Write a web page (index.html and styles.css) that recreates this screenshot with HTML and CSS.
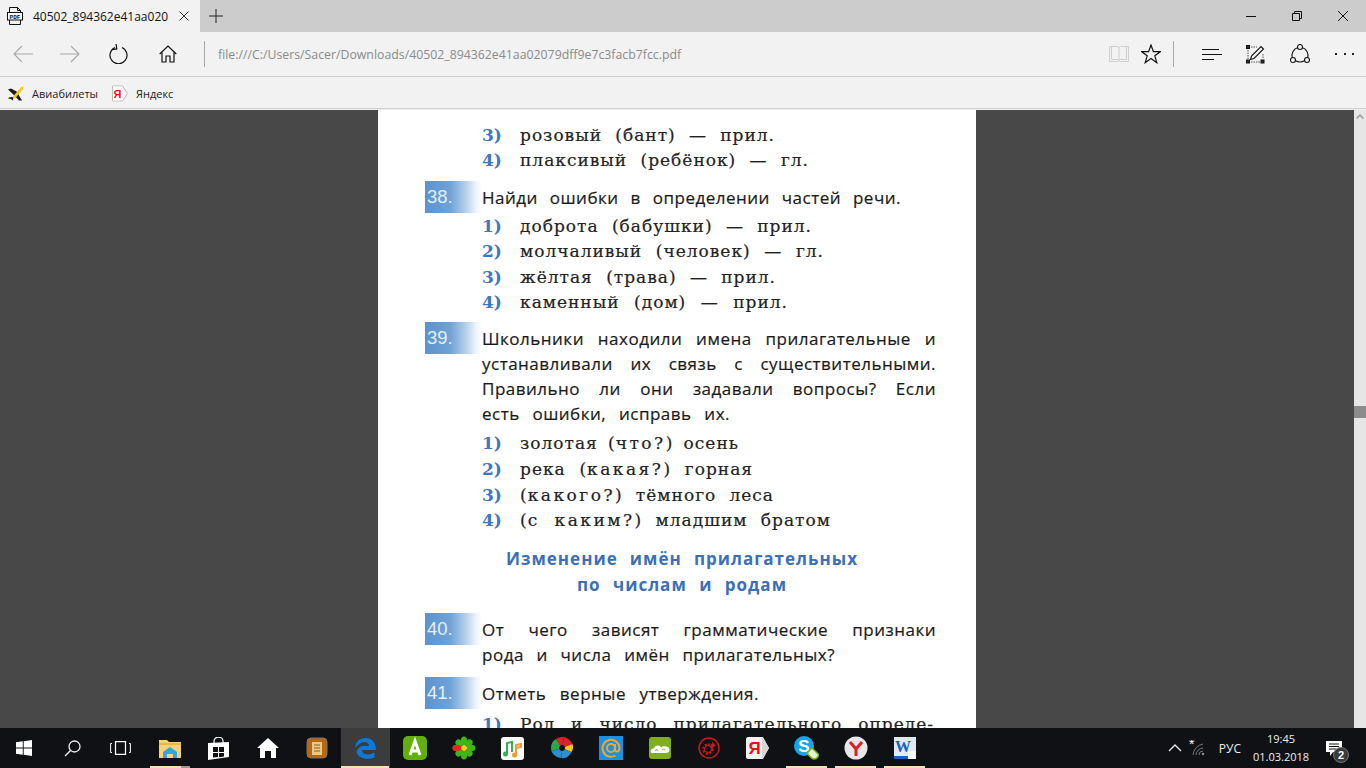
FILE: index.html
```html
<!DOCTYPE html>
<html lang="ru">
<head>
<meta charset="utf-8">
<title>40502_894362e41aa02079dff9e7c3facb7fcc.pdf</title>
<link rel="stylesheet" href="styles.css">
</head>
<body>
<header class="tabstrip">
  <div class="tab">
    <svg class="ic-pdf" width="16" height="18" viewBox="0 0 16 18"><path d="M2.500 5V.5h8l3 3V17.500h-11V13M10.500.5v3h3" fill="none" stroke="#111"/><rect x=".5" y="5.500" width="15" height="7.500" fill="#fff" stroke="#111"/><text x="8" y="11.500" class="pdf-t">PDF</text></svg>
    <span class="tab-title">40502_894362e41aa02079dff9e7c3facb7fcc.pdf</span>
    <svg class="tab-x" width="10" height="10" viewBox="0 0 10 10"><path d="M.5.500l9 9M9.500.500l-9 9" stroke="#333" fill="none"/></svg>
  </div>
  <svg class="tab-new" width="14" height="14" viewBox="0 0 14 14"><path d="M7 0v14M0 7h14" stroke="#222" fill="none"/></svg>
  <div class="winctl">
    <svg width="46" height="32" viewBox="0 0 46 32"><path d="M18 16.500h10" stroke="#111" fill="none"/></svg>
    <svg width="46" height="32" viewBox="0 0 46 32"><path d="M18.500 13.500h7v7h-7zM20.500 13.500v-2h7v7h-2" stroke="#111" fill="none"/></svg>
    <svg width="46" height="32" viewBox="0 0 46 32"><path d="M18 11l10 10M28 11L18 21" stroke="#111" fill="none"/></svg>
  </div>
</header>

<nav class="toolbar">
  <div class="nav-left">
    <svg width="20" height="18" viewBox="0 0 20 18"><path d="M20 9H1M9 1L1 9l8 8" stroke="#a8a8a8" fill="none" stroke-width="1.100"/></svg>
    <svg width="20" height="18" viewBox="0 0 20 18"><path d="M0 9h19M11 1l8 8-8 8" stroke="#a8a8a8" fill="none" stroke-width="1.100"/></svg>
    <svg width="19" height="20" viewBox="0 0 19 20"><path d="M6 3.500a8.500 8.500 0 1 0 7 0" stroke="#111" fill="none" stroke-width="1.200"/><path d="M7.500 0v5H2.500" stroke="#111" fill="none" stroke-width="1.200" transform="rotate(-8 7 3)"/></svg>
    <svg width="18" height="18" viewBox="0 0 18 18"><path d="M.7 9L9 1l8.300 8M3 7.500V17h4v-6h4v6h4V7.500" stroke="#111" fill="none" stroke-width="1.200"/></svg>
  </div>
  <div class="vsep vsep-l"></div>
  <div class="url">file:///C:/Users/Sacer/Downloads/40502_894362e41aa02079dff9e7c3facb7fcc.pdf</div>
  <div class="nav-right">
    <svg class="i-book" width="20" height="18" viewBox="0 0 20 18"><path d="M.5 1.500h8l1.500 1 1.500-1h8v15h-8l-1.500-1-1.500 1h-8zM2.500 1.500v13h6l1.500 1 1.500-1h6v-13M10 2.500v13" stroke="#cfcfcf" fill="none"/></svg>
    <svg class="i-star" width="20" height="20" viewBox="0 0 20 20"><path d="M10 1l2.400 6.600h7l-5.600 4.200 2 6.900L10 14.600l-5.800 4.100 2-6.900L.6 7.600h7z" stroke="#111" fill="none" stroke-width="1.200"/></svg>
    <div class="vsep vsep-r"></div>
    <svg class="i-hub" width="20" height="11" viewBox="0 0 20 11"><path d="M0 .5h17M0 5.500h20M0 10.500h12" stroke="#111" fill="none"/></svg>
    <svg class="i-note" width="19" height="19" viewBox="0 0 19 19"><rect x=".5" y=".5" width="3" height="3" fill="#333" stroke="#111"/><rect x="15" y="15" width="3" height="3" fill="#333" stroke="#111"/><rect x=".5" y="15" width="3" height="3" fill="#333" stroke="#111"/><path d="M2 5v9M5 17h9M5 2h6M17 9v5" stroke="#555" stroke-dasharray="1.500 1" fill="none"/><path d="M4.500 14.500l1-3.500L15 1.500 17.500 4 8 13.500z" stroke="#111" fill="none" stroke-width="1.100"/></svg>
    <svg class="i-share" width="20" height="20" viewBox="0 0 20 20"><g stroke="#111" fill="none" stroke-width="1.100"><circle cx="10" cy="3" r="2.500"/><circle cx="3" cy="16" r="2.500"/><circle cx="17" cy="16" r="2.500"/><path d="M12.500 3.800a8 8 0 0 1 5.200 9.800M7.500 3.800a8 8 0 0 0-5.200 9.800M5.500 16.800a10 10 0 0 0 9 0"/></g></svg>
    <div class="dots"><i></i><i></i><i></i></div>
  </div>
</nav>

<div class="favbar">
  <svg width="16" height="15" viewBox="0 0 16 15"><path d="M0 3.500L3 2.500 9.500 6l1.500 3.500L14 14.500H11L6.500 9.500z" fill="#1a1a1a"/><path d="M4 11l-3 .5L0 12.500 3 13l1.500 1.500.5-1 .5-2z" fill="#1a1a1a"/><path d="M15.500 .3L13 1.300 5 10.500 7 12.500 15 3z" fill="#f5c60a"/></svg>
  <span class="fav-l1">Авиабилеты</span>
  <svg class="fav-ya" width="16" height="17" viewBox="0 0 16 17"><path d="M.5 1h10l5 7.500-5 7.500H.5z" fill="#f4f4f4" stroke="#bbb"/><rect x="1" y="1.500" width="9.500" height="14" fill="#fff"/><text x="5.500" y="13" class="ya-t">Я</text></svg>
  <span class="fav-l2">Яндекс</span>
</div>

<main class="viewer">
  <div class="canvas">
    <article class="page">
      <ol class="opts first">
        <li><b>3)</b><span class="w1">розовый (бант) — прил.</span></li>
        <li><b>4)</b><span class="w2">плаксивый (ребёнок) — гл.</span></li>
      </ol>
      <section class="task t38">
        <div class="badge">38.</div>
        <div class="qt"><p class="q-38">Найди ошибки в определении частей речи.</p></div>
      </section>
      <ol class="opts gap">
        <li><b>1)</b><span class="w3">доброта (бабушки) — прил.</span></li>
        <li><b>2)</b><span class="w4">молчаливый (человек) — гл.</span></li>
        <li><b>3)</b><span class="w5">жёлтая (трава) — прил.</span></li>
        <li><b>4)</b><span class="w6">каменный (дом) — прил.</span></li>
      </ol>
      <section class="task t39">
        <div class="badge">39.</div>
        <div class="qt">
          <p class="full">Школьники находили имена прилагательные и</p>
          <p class="full">устанавливали их связь с существительными.</p>
          <p class="full">Правильно ли они задавали вопросы? Если</p>
          <p class="q-39">есть ошибки, исправь их.</p>
        </div>
      </section>
      <ol class="opts wide">
        <li><b>1)</b><span class="w7">золотая (<em>что?</em>) осень</span></li>
        <li><b>2)</b><span class="w8">река (<em>какая?</em>) горная</span></li>
        <li><b>3)</b><span class="w9">(<em>какого?</em>) тёмного леса</span></li>
        <li><b>4)</b><span class="w10">(<em>с каким?</em>) младшим братом</span></li>
      </ol>
      <h2 class="topic"><span class="h1">Изменение имён прилагательных</span><span class="h2">по числам и родам</span></h2>
      <section class="task t40">
        <div class="badge">40.</div>
        <div class="qt">
          <p class="full">От чего зависят грамматические признаки</p>
          <p class="q-40">рода и числа имён прилагательных?</p>
        </div>
      </section>
      <section class="task t41">
        <div class="badge">41.</div>
        <div class="qt"><p class="q-41">Отметь верные утверждения.</p></div>
      </section>
      <ol class="opts last">
        <li><b>1)</b><span class="w11">Род и число прилагательного опреде-</span></li>
      </ol>
    </article>
  </div>
  <div class="scrollbar">
    <svg class="sb-up" width="8" height="5" viewBox="0 0 8 5"><path d="M.5 4.500L4 1l3.500 3.500" stroke="#999" stroke-width="1.500" fill="none"/></svg>
    <div class="sb-thumb"></div>
  </div>
</main>

<footer class="taskbar">
  <div class="tb-sys">
    <div class="sys"><svg width="16" height="16" viewBox="0 0 16 16"><path d="M0 2.300L6.800 1.300V7.500H0zM7.700 1.200L16 0V7.500H7.700zM0 8.400H6.800V14.700L0 13.700zM7.700 8.400H16V16L7.700 14.800z" fill="#fff"/></svg></div>
    <div class="sys"><svg width="17" height="17" viewBox="0 0 17 17"><circle cx="10.500" cy="6.500" r="5.500" stroke="#eee" stroke-width="1.300" fill="none"/><path d="M6.500 10.500L1 16" stroke="#eee" stroke-width="1.500"/></svg></div>
    <div class="sys"><svg width="21" height="14" viewBox="0 0 21 14"><path d="M5.500.7h10v12.600h-10z" stroke="#fff" stroke-width="1.200" fill="none"/><path d="M2 2.500H.6v9H2M19 2.500h1.400v9H19" stroke="#fff" fill="none"/></svg></div>
  </div>
  <div class="tb-apps">
    <div class="app mark-double"><svg width="22" height="20" viewBox="0 0 22 20"><path d="M0 2h8l2 2h12v16H0z" fill="#f5d27a"/><path d="M0 5h22v2H0z" fill="#e8b93e"/><path d="M4 14l7-5 7 5v6H4z" fill="#2ea7e0"/><rect x="8" y="16" width="6" height="4" fill="#f5d27a"/></svg></div>
    <div class="app"><svg width="21" height="23" viewBox="0 0 21 23"><path d="M0 6l21-1v15l-21 3z" fill="#fff"/><path d="M6 6V4c0-5 9-5 9 0v2" stroke="#fff" fill="none" stroke-width="1.200"/><path d="M5 10h5v5H5zM11 10h5v5h-5zM5 16h5v4l-5 .6zM11 16h5v3.600l-5 .6z" fill="#111"/></svg></div>
    <div class="app"><svg width="22" height="20" viewBox="0 0 22 20"><path d="M11 0L22 10h-3v10h-5v-7H8v7H3V10H0z" fill="#fff"/></svg></div>
    <div class="app"><svg width="22" height="22" viewBox="0 0 22 22"><rect x="1" y="1" width="20" height="20" rx="4" fill="#b8690f" stroke="#777"/><rect x="6" y="5" width="10" height="13" fill="#e8c98a"/><path d="M8 8h6M8 11h6M8 14h6" stroke="#8c5a1a"/></svg></div>
    <div class="app active"><svg width="21" height="21" viewBox="0 0 21 21"><path d="M0 10C.5 3.500 5 0 10.500 0 17 0 21 4.500 21 12H7c.2 4.500 6.500 6 12.500 2.500v5C13 22 2.500 21 1.500 13.500 3 10 5 8.500 7 8h7c0-3.500-5-5-8-3-2 1-4.500 3-6 5z" fill="#0f78d4"/></svg></div>
    <div class="app"><svg width="24" height="24" viewBox="0 0 24 24"><rect width="24" height="24" rx="5" fill="#62b00c"/><path d="M7 19l5-14 5 14M8.500 15h7" stroke="#fff" stroke-width="3" fill="none"/></svg></div>
    <div class="app"><svg width="24" height="24" viewBox="0 0 24 24"><g fill="#3fb618"><ellipse cx="12" cy="5" rx="3.200" ry="4.500"/><ellipse cx="12" cy="19" rx="3.200" ry="4.500"/><ellipse cx="5" cy="12" rx="4.500" ry="3.200"/><ellipse cx="19" cy="12" rx="4.500" ry="3.200"/><ellipse cx="7" cy="7" rx="3.200" ry="3.800" transform="rotate(-45 7 7)"/><ellipse cx="17" cy="7" rx="3.200" ry="3.800" transform="rotate(45 17 7)"/><ellipse cx="17" cy="17" rx="3.200" ry="3.800" transform="rotate(-45 17 17)"/><ellipse cx="7" cy="17" rx="3.200" ry="3.800" transform="rotate(45 7 17)"/></g><ellipse cx="5" cy="12" rx="4.500" ry="3" fill="#e22"/><circle cx="12" cy="12" r="3" fill="#f6d415"/></svg></div>
    <div class="app"><svg width="23" height="23" viewBox="0 0 23 23"><rect width="23" height="23" rx="3" fill="#fafafa"/><path d="M6 17V6l5-1v10" stroke="#2fb44b" stroke-width="2" fill="none"/><circle cx="4.500" cy="17" r="2.500" fill="#2fb44b"/><path d="M15 18V8l5-1v3l-5 1" stroke="#f29a2e" stroke-width="2" fill="none"/><circle cx="13.500" cy="18" r="2.500" fill="#f29a2e"/></svg></div>
    <div class="app"><svg width="22" height="22" viewBox="0 0 22 22"><path d="M11 11L5 2C1 4-1 9 .5 14z" fill="#2aa84a"/><path d="M11 11L5 2c3-2 6-2 8-2z" fill="#d8232a"/><path d="M11 11l2-11c4 1 7 4 8.500 7z" fill="#d8232a"/><path d="M11 11l10.500-4c1 3 .5 6-1 8z" fill="#f6c90e"/><path d="M11 11l9.500 4c-2 4-6 7-10 6z" fill="#2e8fd0"/><path d="M11 11l-.5 10C6 21 2 18 .5 14z" fill="#2e8fd0"/><path d="M11 8a3 3 0 1 0 .1 0z" fill="#0f1114"/></svg></div>
    <div class="app"><svg width="24" height="24" viewBox="0 0 24 24"><rect width="24" height="24" fill="#1c8fe6"/><circle cx="12" cy="12" r="4" stroke="#f5a623" stroke-width="2" fill="none"/><path d="M16 8v5.500c0 3 4.500 3 4.500-1.500A8.500 8.500 0 1 0 16.500 19.500" stroke="#f5a623" stroke-width="2" fill="none"/></svg></div>
    <div class="app"><svg width="22" height="22" viewBox="0 0 22 22"><rect width="22" height="22" rx="3" fill="#7fae1e"/><path d="M1.500 15c0-2.500 1.500-4 3.500-3.500C5.500 8 11 7.500 12 10.500c2-2 8.500-1.500 8.500 2 0 2.500-2 3.500-4 3.500H3.500c-1 0-2-.5-2-1z" fill="#fff"/><path d="M13 13c1-1.500 3.500-1 3 .5" stroke="#7fae1e" fill="none"/><path d="M6 14c.5-1.500 3-1.500 3 0" stroke="#7fae1e" fill="none"/></svg></div>
    <div class="app"><svg width="22" height="22" viewBox="0 0 22 22"><circle cx="11" cy="11" r="10" stroke="#c8191f" stroke-width="1.500" fill="none"/><circle cx="10" cy="12" r="4.500" stroke="#c8191f" stroke-width="2.500" stroke-dasharray="2 1.500" fill="none"/><circle cx="10" cy="12" r="3.500" stroke="#c8191f" fill="none"/><path d="M12 10l2.500-5 3.500 4-2.500.5-.5 3z" fill="#c8191f"/></svg></div>
    <div class="app"><svg width="24" height="24" viewBox="0 0 24 24"><path d="M2 1h15l6 11-6 11H2c-1 0-2-1-2-2V3c0-1 1-2 2-2z" fill="#f1f1f1"/><path d="M16 1l7 11-7 11z" fill="#d5d5d5"/><text x="8.500" y="18" class="ya-big">Я</text></svg></div>
    <div class="app mark"><svg width="25" height="24" viewBox="0 0 25 24"><circle cx="10" cy="10" r="10" fill="#18a4e8"/><text x="10" y="16" class="sk-t">S</text><path d="M13 17l5-5 6 6c1 2-1 5-4 5-2 0-3-1-7-6z" fill="#e8f4d0" stroke="#7cb518" stroke-width="1.500"/></svg></div>
    <div class="app mark"><svg width="24" height="24" viewBox="0 0 24 24"><circle cx="12" cy="12" r="11.500" fill="#e8e8e8"/><path d="M6 6l6 7 6-7M12 13v7" stroke="#e02020" stroke-width="3" fill="none"/></svg></div>
    <div class="app mark"><svg width="22" height="22" viewBox="0 0 22 22"><rect width="22" height="22" fill="#dfe8f5"/><rect x="14" y="14" width="8" height="8" fill="#f7f7f7"/><path d="M0 19h14v3H0z" fill="#1f5fc0"/><text x="9" y="15" class="wd-t">W</text></svg></div>
  </div>
  <div class="tray">
    <svg class="t-chev" width="14" height="8" viewBox="0 0 14 8"><path d="M1 7l6-6 6 6" stroke="#eee" stroke-width="1.300" fill="none"/></svg>
    <svg class="t-wifi" width="16" height="16" viewBox="0 0 16 16"><text x="0" y="9" class="t-st">*</text><path d="M4 15A12 12 0 0 1 14 4M7 15a8 8 0 0 1 7-7M10 15a4 4 0 0 1 4-4" stroke="#777" fill="none"/><circle cx="14" cy="14" r="1.300" fill="#888"/></svg>
    <span class="t-lang">РУС</span>
    <div class="t-clock"><span>19:45</span><span>01.03.2018</span></div>
    <div class="t-note">
      <svg width="16" height="15" viewBox="0 0 16 15"><path d="M0 0h16v11H7l-3 4v-4H0z" fill="#fff"/><path d="M3 3h10M3 5.500h10M3 8h7" stroke="#111"/></svg>
      <span class="t-badge">2</span>
    </div>
  </div>
</footer>
</body>
</html>
```
FILE: styles.css
```css
* { box-sizing: border-box; }
html, body { margin: 0; height: 100%; }
body {
  width: 1366px; height: 768px; overflow: hidden;
  display: flex; flex-direction: column;
  font-family: "Open Sans", "Liberation Sans", sans-serif;
  background: #f2f2f2; color: #111;
}
svg { display: block; flex: none; }

/* tab strip */
.tabstrip { height: 32px; background: #cccccc; display: flex; align-items: center; flex: none; }
.tab { width: 200px; height: 32px; background: #f2f2f2; display: flex; align-items: center; padding-left: 7px; }
.tab-title { width: 135px; margin-left: 10px; overflow: hidden; white-space: nowrap; font-size: 12px; color: #111; }
.tab-x { margin-left: 11px; }
.ic-pdf { width: 16px; }
.pdf-t { font: bold 6px "Liberation Mono", monospace; fill: #111; text-anchor: middle; }
.tab-new { margin-left: 9px; }
.winctl { margin-left: auto; display: flex; }

/* toolbar */
.toolbar { height: 45px; flex: none; display: flex; align-items: center; border-bottom: 1px solid #cfcfcf; background: #f2f2f2; }
.nav-left { display: flex; align-items: center; width: 204px; padding-left: 13px; }
.nav-left svg:nth-child(2) { margin-left: 27px; }
.nav-left svg:nth-child(3) { margin-left: 29px; }
.nav-left svg:nth-child(4) { margin-left: 31px; }
.vsep { width: 1px; height: 26px; background: #a8a8a8; flex: none; }
.url { margin-left: 13px; font-size: 12.300px; color: #8a8a8a; white-space: nowrap; }
.nav-right { margin-left: auto; display: flex; align-items: center; padding-right: 12px; }
.i-star { margin-left: 12px; }
.vsep-r { margin-left: 12px; }
.i-hub { margin-left: 28px; }
.i-note { margin-left: 24px; }
.i-share { margin-left: 25px; }
.dots { margin-left: 25px; width: 19px; display: flex; justify-content: space-between; }
.dots i { width: 2px; height: 2px; background: #222; display: block; }

/* favourites */
.favbar { height: 32px; flex: none; display: flex; align-items: center; padding: 2px 0 0 8px; background: #f2f2f2; border-bottom: 1px solid #cfcfcf; font-size: 11px; color: #222; }
.fav-l1 { margin-left: 8px; }
.fav-ya { margin-left: 14px; }
.fav-l2 { margin-left: 8px; }
.ya-t { font: bold 11px "Liberation Sans", sans-serif; fill: #e5121a; text-anchor: middle; }

/* viewer */
.viewer { flex: 1; min-height: 0; display: flex; background: #484848; margin-top: 1px; overflow: hidden; }
.canvas { flex: 1; display: flex; overflow: hidden; padding-left: 378px; }
.page { width: 598px; height: 640px; flex: none; background: #fff; padding: 13px 40px 0 47px; color: #1c1c1c; }
.scrollbar { width: 12px; flex: none; background: #e6e6e6; position: relative; }
.sb-up { position: absolute; left: 2px; top: 4px; }
.sb-thumb { position: absolute; left: 0; top: 296px; width: 12px; height: 12px; background: #8c8c8c; }

/* page content */
.opts { list-style: none; margin: 0; padding: 0 0 0 57px; font-family: "DejaVu Serif", serif; font-size: 17px; color: #222; }
.opts li { height: 25.400px; line-height: 25.400px; display: flex; white-space: nowrap; }
.opts.wide li { height: 25.600px; line-height: 25.600px; }
.opts b { width: 38px; flex: none; color: #3f78bd; font-weight: 700; font-size: 17px; }
.opts span { display: block; text-align: justify; text-align-last: justify; white-space: normal; letter-spacing: 1px; -webkit-text-stroke: .2px #222; }
.opts em { font-style: normal; letter-spacing: 2.500px; }
.opts.gap { margin-top: 4px; }
.opts.wide { margin-top: 5px; }
.opts.last { margin-top: 6px; }
.w1 { width: 255px; } .w2 { width: 289px; } .w3 { width: 292px; } .w4 { width: 304px; }
.w5 { width: 256px; } .w6 { width: 268px; } .w7 { width: 219px; } .w8 { width: 233px; }
.w9 { width: 254px; } .w10 { width: 311px; } .w11 { width: 414px; }
.task { display: flex; align-items: flex-start; font-family: "Open Sans", "Liberation Sans", sans-serif; font-size: 17px; letter-spacing: .5px; color: #1a1a1a; -webkit-text-stroke: .2px #1a1a1a; }
.badge {
  width: 57px; height: 32px; margin-top: -4px; margin-bottom: -4px; flex: none;
  background: linear-gradient(90deg, #5c93cd 0%, #6fa3d6 45%, #b7d1ea 72%, #eef5fb 90%, #fff 100%);
  color: #e6eef7; font: 18.500px/32px "Liberation Sans", sans-serif; letter-spacing: 0; padding-left: 2px; -webkit-text-stroke: 0;
}
.qt p { margin: 0; height: 25px; line-height: 25px; text-align: justify; text-align-last: justify; }
.full { width: 454px; }
.q-38 { width: 419px; } .q-39 { width: 248px; } .q-40 { width: 353px; } .q-41 { width: 277px; }
.t38 { margin-top: 11px; }
.t39 { margin-top: 11px; }
.t40 { margin-top: 19px; }
.t41 { margin-top: 14px; }
.topic { margin: 12px 0 0; padding: 0; font-family: "Open Sans", "Liberation Sans", sans-serif; font-size: 17px; letter-spacing: 1px; font-weight: 700; color: #3b6fb8; display: flex; flex-direction: column; align-items: flex-start; }
.topic span { height: 26px; line-height: 26px; display: block; text-align: justify; text-align-last: justify; }
.h1 { width: 352px; margin-left: 81px; }
.h2 { width: 210px; margin-left: 152px; }

/* taskbar */
.taskbar { height: 40px; flex: none; display: flex; background: #0f1114; color: #fff; }
.tb-sys { display: flex; width: 145px; flex: none; }
.sys { width: 48px; display: flex; align-items: center; justify-content: center; }
.sys:last-child { width: 49px; }
.tb-apps { display: flex; }
.app { width: 49px; height: 40px; display: flex; align-items: center; justify-content: center; position: relative; }
.app.active { background: #3c3c3c; }
.app.active::after, .app.mark::after, .app.mark-double::after { content: ""; position: absolute; left: 4px; right: 4px; bottom: 0; height: 2px; background: #f9dfb2; }
.app.active::after { left: 0; right: 1px; }
.app.mark-double::after { left: 5px; right: 4px; background: linear-gradient(90deg, #f9dfb2 78%, #a79a80 78%); }
.ya-big { font: bold 17px "Liberation Sans", sans-serif; fill: #e5121a; text-anchor: middle; }
.sk-t { font: bold 17px "Liberation Sans", sans-serif; fill: #fff; text-anchor: middle; }
.wd-t { font: bold 16px "Liberation Serif", serif; fill: #1f5fc0; text-anchor: middle; }
.tray { margin-left: auto; display: flex; align-items: center; font-size: 12px; color: #eee; }
.t-chev { margin-right: 7px; }
.t-st { font: 14px "Liberation Sans", sans-serif; fill: #fff; }
.t-lang { margin-left: 14px; }
.t-clock { margin-left: 13px; width: 54px; display: flex; flex-direction: column; align-items: center; line-height: 18px; font-size: 11px; white-space: nowrap; }
.t-note { width: 46px; margin-left: 12px; padding-left: 6px; position: relative; }
.t-badge { position: absolute; left: 13px; top: 6px; width: 16px; height: 16px; border-radius: 50%; background: #3a3a3a; border: 1px solid #777; color: #fff; font: bold 11px/14px "Liberation Sans", sans-serif; text-align: center; }
```
